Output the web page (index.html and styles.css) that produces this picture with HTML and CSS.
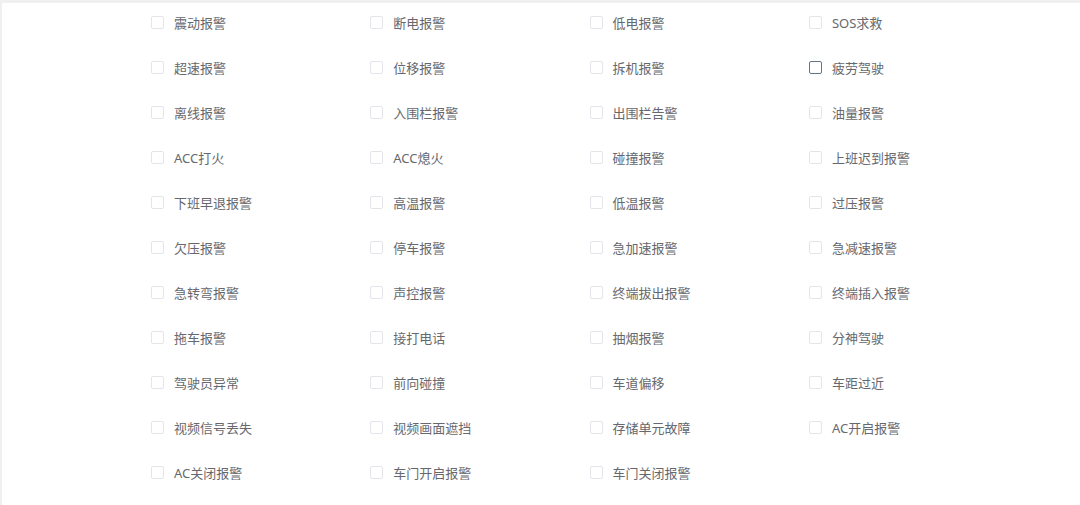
FILE: index.html
```html
<!DOCTYPE html>
<html lang="zh-CN">
<head>
  <meta charset="UTF-8">
  <meta name="viewport" content="width=device-width, initial-scale=1.0">
  <title>报警类型</title>
  <link rel="stylesheet" href="styles.css">
</head>
<body>
  <div class="panel">
    <div class="lista-alarme">
      <label class="optiune"><span class="bifa"></span>震动报警</label>
      <label class="optiune"><span class="bifa"></span>断电报警</label>
      <label class="optiune"><span class="bifa"></span>低电报警</label>
      <label class="optiune"><span class="bifa"></span>SOS求救</label>
      <label class="optiune"><span class="bifa"></span>超速报警</label>
      <label class="optiune"><span class="bifa"></span>位移报警</label>
      <label class="optiune"><span class="bifa"></span>拆机报警</label>
      <label class="optiune hover"><span class="bifa"></span>疲劳驾驶</label>
      <label class="optiune"><span class="bifa"></span>离线报警</label>
      <label class="optiune"><span class="bifa"></span>入围栏报警</label>
      <label class="optiune"><span class="bifa"></span>出围栏告警</label>
      <label class="optiune"><span class="bifa"></span>油量报警</label>
      <label class="optiune"><span class="bifa"></span>ACC打火</label>
      <label class="optiune"><span class="bifa"></span>ACC熄火</label>
      <label class="optiune"><span class="bifa"></span>碰撞报警</label>
      <label class="optiune"><span class="bifa"></span>上班迟到报警</label>
      <label class="optiune"><span class="bifa"></span>下班早退报警</label>
      <label class="optiune"><span class="bifa"></span>高温报警</label>
      <label class="optiune"><span class="bifa"></span>低温报警</label>
      <label class="optiune"><span class="bifa"></span>过压报警</label>
      <label class="optiune"><span class="bifa"></span>欠压报警</label>
      <label class="optiune"><span class="bifa"></span>停车报警</label>
      <label class="optiune"><span class="bifa"></span>急加速报警</label>
      <label class="optiune"><span class="bifa"></span>急减速报警</label>
      <label class="optiune"><span class="bifa"></span>急转弯报警</label>
      <label class="optiune"><span class="bifa"></span>声控报警</label>
      <label class="optiune"><span class="bifa"></span>终端拔出报警</label>
      <label class="optiune"><span class="bifa"></span>终端插入报警</label>
      <label class="optiune"><span class="bifa"></span>拖车报警</label>
      <label class="optiune"><span class="bifa"></span>接打电话</label>
      <label class="optiune"><span class="bifa"></span>抽烟报警</label>
      <label class="optiune"><span class="bifa"></span>分神驾驶</label>
      <label class="optiune"><span class="bifa"></span>驾驶员异常</label>
      <label class="optiune"><span class="bifa"></span>前向碰撞</label>
      <label class="optiune"><span class="bifa"></span>车道偏移</label>
      <label class="optiune"><span class="bifa"></span>车距过近</label>
      <label class="optiune"><span class="bifa"></span>视频信号丢失</label>
      <label class="optiune"><span class="bifa"></span>视频画面遮挡</label>
      <label class="optiune"><span class="bifa"></span>存储单元故障</label>
      <label class="optiune"><span class="bifa"></span>AC开启报警</label>
      <label class="optiune"><span class="bifa"></span>AC关闭报警</label>
      <label class="optiune"><span class="bifa"></span>车门开启报警</label>
      <label class="optiune"><span class="bifa"></span>车门关闭报警</label>
    </div>
  </div>
</body>
</html>
```

FILE: styles.css
```css
html, body {
  height: 100%;
}
body {
  margin: 0;
  background-color: #f0f0f0;
  font-family: "Noto Sans", "Noto Sans CJK SC", sans-serif;
  overflow: hidden;
}
.panel {
  background: white;
  margin: 3px 0 0 2px;
  height: calc(100% - 3px);
}
.lista-alarme {
  display: grid;
  grid-template-columns: repeat(4, 219.3px);
  grid-auto-rows: 45px;
  padding-left: 149px;
}
.optiune {
  display: flex;
  align-items: center;
  height: 20px;
  padding-top: 9.5px;
  font-size: 13px;
  color: #66686e;
  cursor: pointer;
}
.bifa {
  width: 11px;
  height: 11px;
  border: 1px solid #e3e5ea;
  border-radius: 2px;
  margin-right: 10px;
  flex-shrink: 0;
}
.optiune.hover .bifa {
  border-color: #66728c;
}
```
